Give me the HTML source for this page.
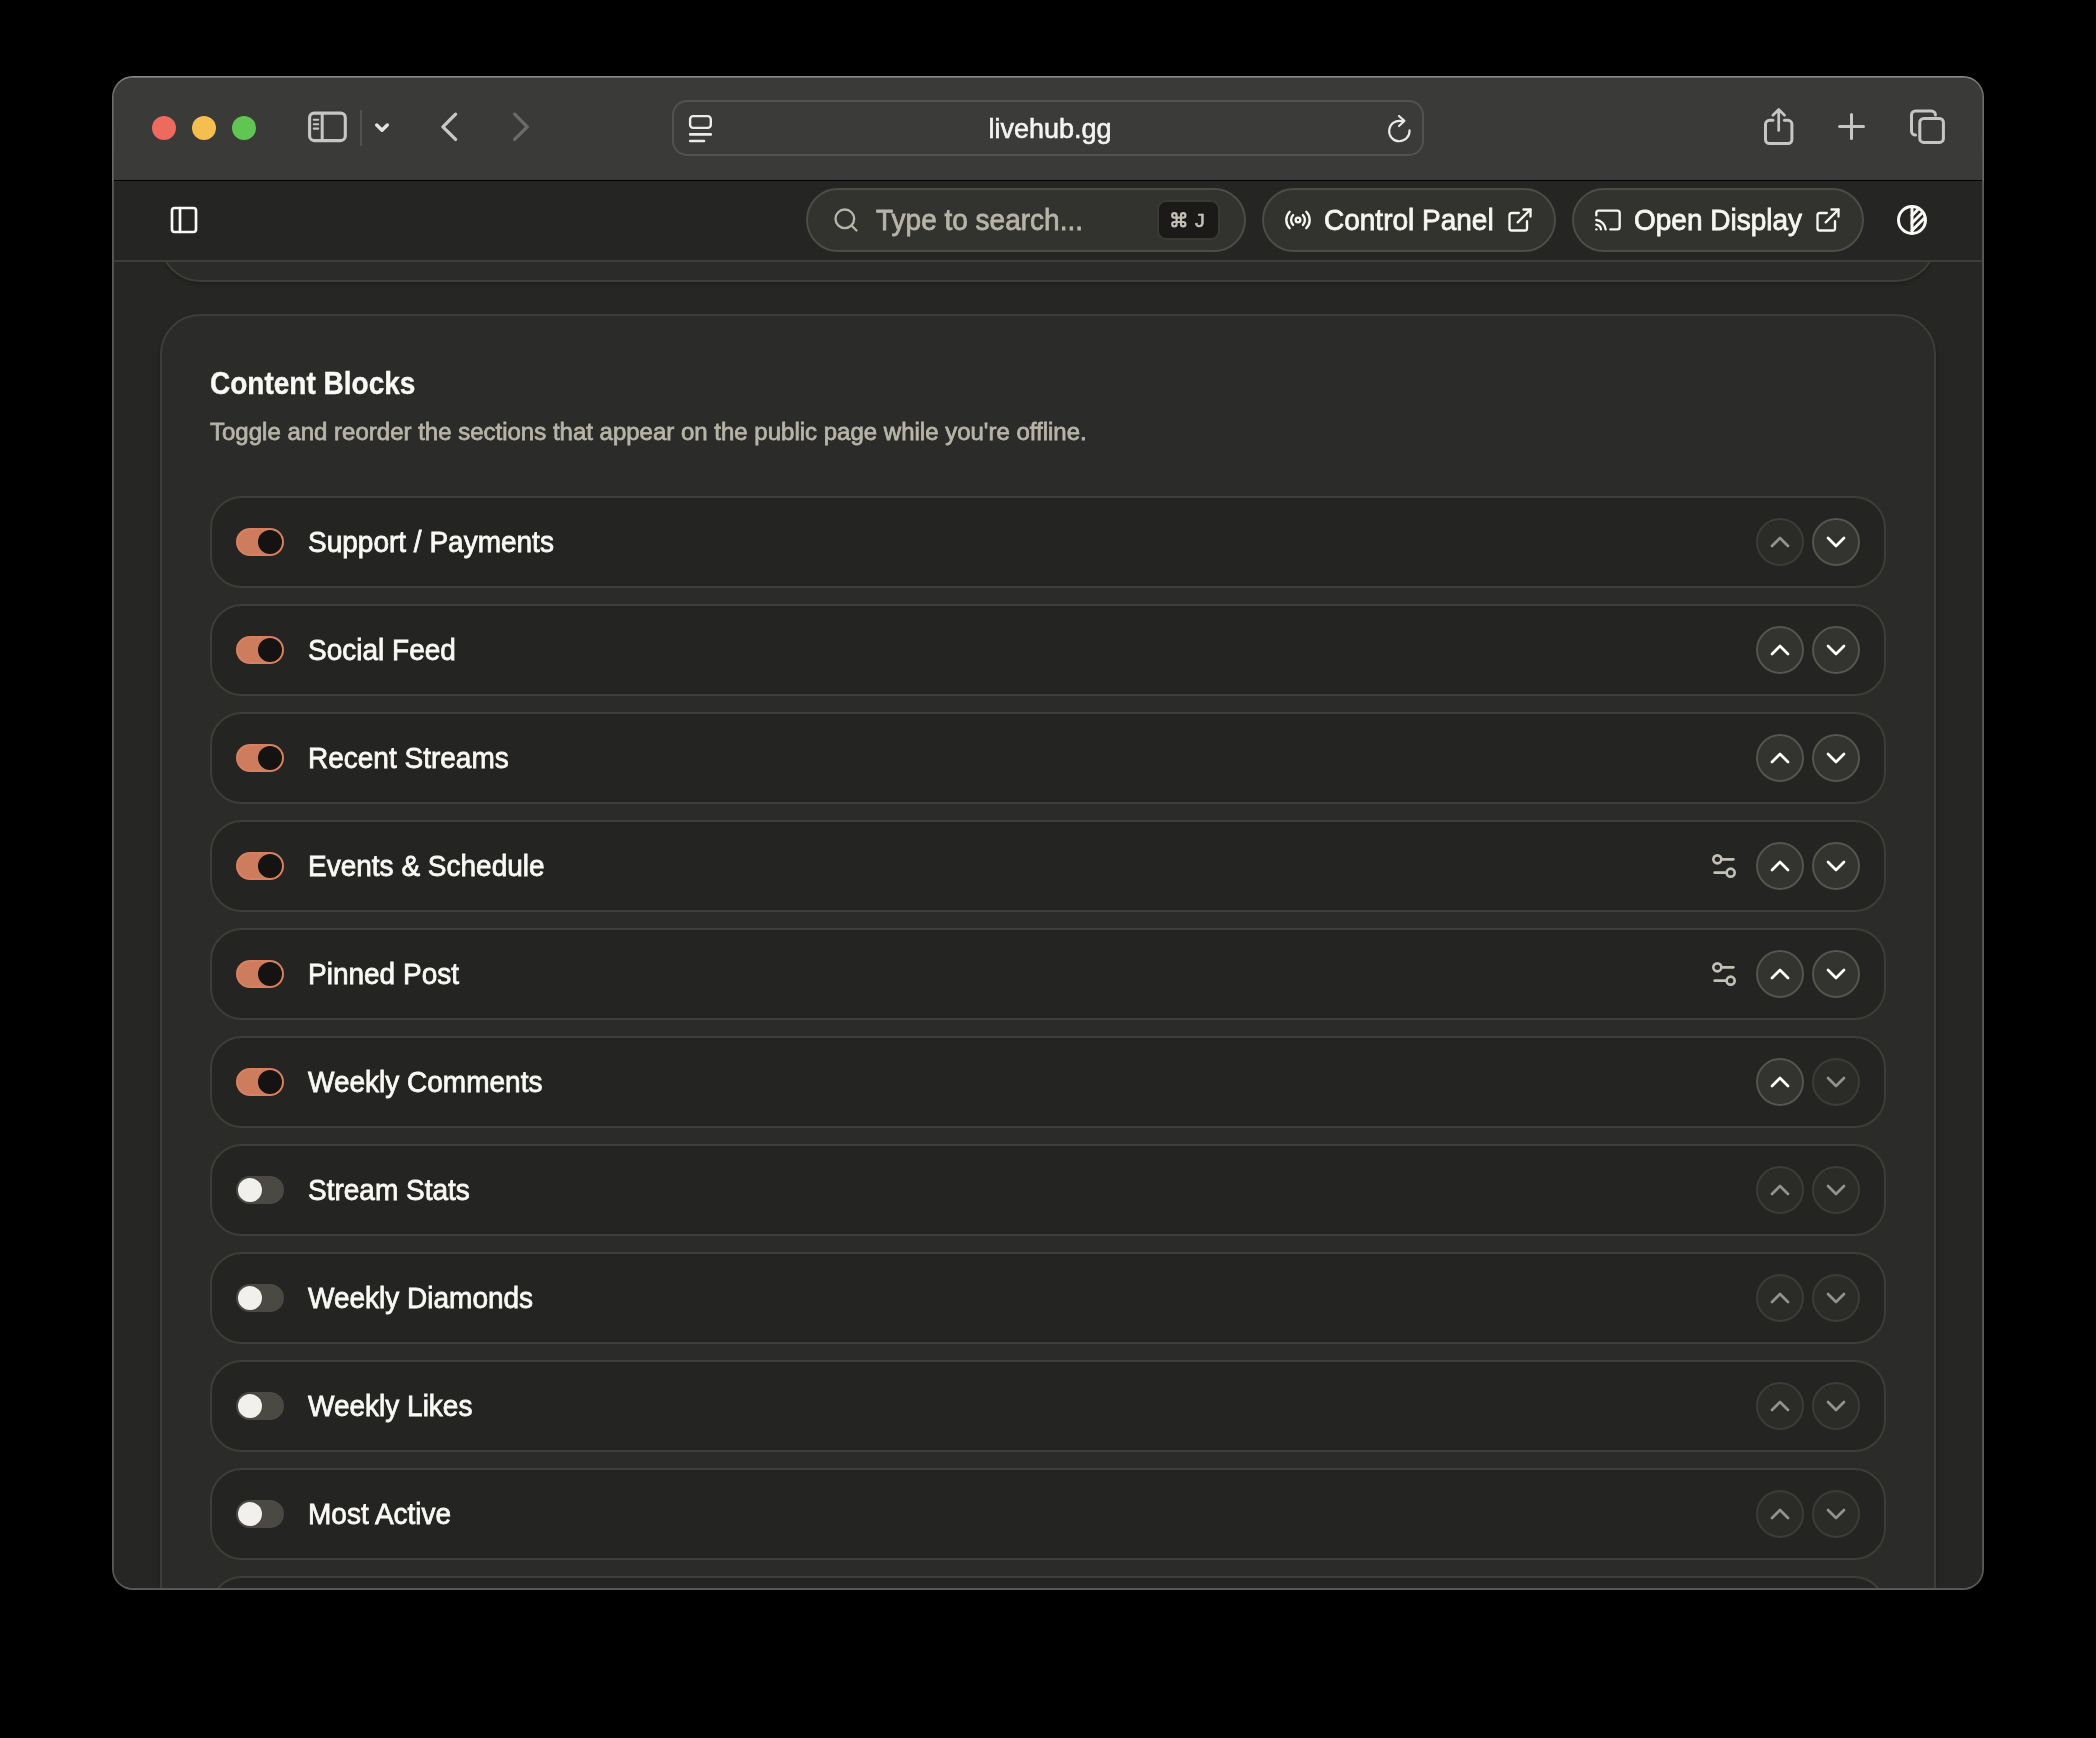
<!DOCTYPE html>
<html><head><meta charset="utf-8"><title>livehub.gg</title>
<style>
*{box-sizing:border-box;margin:0;padding:0}
html,body{width:2096px;height:1738px;background:#000;overflow:hidden}
body{font-family:"Liberation Sans",sans-serif;position:relative}
.abs{position:absolute}
.t{position:absolute;white-space:nowrap}
#win{position:absolute;left:112px;top:76px;width:1872px;height:1514px;border-radius:21px;background:linear-gradient(180deg,#8c8c8c 0,#6e6e6e 20px,#6a6a6a 104px,#5a5a58 105px,#5a5a58 100%);overflow:hidden}
#win2{position:absolute;left:1px;top:1px;right:1px;bottom:1px;border-radius:20px;background:linear-gradient(180deg,#6a6a6a 0,#585858 20px,#565656 103px,#50504e 104px,#50504e 1490px,#565654 1512px)}
#winin{position:absolute;left:2px;top:2px;right:2px;bottom:2px;border-radius:19px;overflow:hidden;background:#262624}
#pg{position:absolute;left:-114px;top:-78px;width:2096px;height:1738px;will-change:transform}
.tl{position:absolute;width:24px;height:24px;border-radius:50%;top:116px}
#url{position:absolute;left:672px;top:100px;width:752px;height:56px;border:2px solid #525250;border-radius:15px;background:#3b3b39}
.pill{position:absolute;top:188px;height:64px;border:2px solid #4d4c46;border-radius:32px;background:#32322e}
.card{position:absolute;left:160px;width:1776px;border:2px solid #3e3e38;background:#2b2b29;box-shadow:0 2px 5px rgba(0,0,0,.14),0 2px 3px -1px rgba(0,0,0,.12)}
.row{position:absolute;left:210px;width:1676px;height:92px;border:2px solid #3e3e38;border-radius:32px;background:#242422}
.sw{position:absolute;left:236px;width:48px;height:28px;border-radius:14px}
.sw.on{background:#cd7c5e;border:2px solid #d98060}
.sw.off{background:#4a4943;border:2px solid #4a4943}
.sw i{position:absolute;top:0;width:24px;height:24px;border-radius:50%;display:block}
.sw.on i{left:20px;background:#141311}
.sw.off i{left:0;background:#f1f0ec}
.btn{position:absolute;width:48px;height:48px;border-radius:50%;border:2px solid #55544d;background:#33332f}
.btn.dis{opacity:.5}
.btn svg{position:absolute;left:6px;top:6px}
</style></head><body>
<div id="win"><div id="win2"></div><div id="winin"><div id="pg">
<div class="abs" style="left:114px;top:78px;width:1868px;height:102px;background:#3a3a38"></div>
<div class="abs" style="left:114px;top:180px;width:1868px;height:1px;background:#000"></div>
<div class="abs" style="left:114px;top:262px;width:1868px;height:1326px;background:#262624"></div>
<div class="card" style="top:200px;height:82px;border-radius:40px"></div>
<div class="card" style="top:314px;height:1400px;border-radius:40px"></div>
<div class="t" style="left:210px;top:364.30px;height:42px;line-height:42px;font-size:28px;color:#faf9f5;font-weight:bold;-webkit-text-stroke:0.35px #faf9f5;transform-origin:0 30.70px;transform:scaleY(1.11);">Content Blocks</div>
<div class="t" style="left:210px;top:413.68px;height:36px;line-height:36px;font-size:24px;color:#b7b5a9;font-weight:normal;-webkit-text-stroke:0.75px #b7b5a9;transform-origin:0 26.32px;transform:scaleY(1.03);">Toggle and reorder the sections that appear on the public page while you're offline.</div>
<div class="row" style="top:496px"></div><div class="sw on" style="top:528px"><i></i></div><div class="t" style="left:308px;top:522.30px;height:42px;line-height:42px;font-size:28px;color:#faf9f5;font-weight:normal;-webkit-text-stroke:0.75px #faf9f5;transform-origin:0 30.70px;transform:scaleY(1.03);">Support / Payments</div><div class="btn dis" style="left:1756px;top:518px"><svg width="32" height="32" viewBox="0 0 24 24" fill="none" stroke="#fff" stroke-width="2" stroke-linecap="round" stroke-linejoin="round"><path d="m18 15-6-6-6 6"/></svg></div><div class="btn" style="left:1812px;top:518px"><svg width="32" height="32" viewBox="0 0 24 24" fill="none" stroke="#fff" stroke-width="2" stroke-linecap="round" stroke-linejoin="round"><path d="m6 9 6 6 6-6"/></svg></div>
<div class="row" style="top:604px"></div><div class="sw on" style="top:636px"><i></i></div><div class="t" style="left:308px;top:630.30px;height:42px;line-height:42px;font-size:28px;color:#faf9f5;font-weight:normal;-webkit-text-stroke:0.75px #faf9f5;transform-origin:0 30.70px;transform:scaleY(1.03);">Social Feed</div><div class="btn" style="left:1756px;top:626px"><svg width="32" height="32" viewBox="0 0 24 24" fill="none" stroke="#fff" stroke-width="2" stroke-linecap="round" stroke-linejoin="round"><path d="m18 15-6-6-6 6"/></svg></div><div class="btn" style="left:1812px;top:626px"><svg width="32" height="32" viewBox="0 0 24 24" fill="none" stroke="#fff" stroke-width="2" stroke-linecap="round" stroke-linejoin="round"><path d="m6 9 6 6 6-6"/></svg></div>
<div class="row" style="top:712px"></div><div class="sw on" style="top:744px"><i></i></div><div class="t" style="left:308px;top:738.30px;height:42px;line-height:42px;font-size:28px;color:#faf9f5;font-weight:normal;-webkit-text-stroke:0.75px #faf9f5;transform-origin:0 30.70px;transform:scaleY(1.03);">Recent Streams</div><div class="btn" style="left:1756px;top:734px"><svg width="32" height="32" viewBox="0 0 24 24" fill="none" stroke="#fff" stroke-width="2" stroke-linecap="round" stroke-linejoin="round"><path d="m18 15-6-6-6 6"/></svg></div><div class="btn" style="left:1812px;top:734px"><svg width="32" height="32" viewBox="0 0 24 24" fill="none" stroke="#fff" stroke-width="2" stroke-linecap="round" stroke-linejoin="round"><path d="m6 9 6 6 6-6"/></svg></div>
<div class="row" style="top:820px"></div><div class="sw on" style="top:852px"><i></i></div><div class="t" style="left:308px;top:846.30px;height:42px;line-height:42px;font-size:28px;color:#faf9f5;font-weight:normal;-webkit-text-stroke:0.75px #faf9f5;transform-origin:0 30.70px;transform:scaleY(1.03);">Events &amp; Schedule</div><svg class="abs" style="left:1708px;top:850px" width="32" height="32" viewBox="0 0 24 24" fill="none" stroke="#c3c0b6" stroke-width="2" stroke-linecap="round" stroke-linejoin="round"><path d="M19 7h-9"/><path d="M14 17H5"/><circle cx="17" cy="17" r="3"/><circle cx="7" cy="7" r="3"/></svg><div class="btn" style="left:1756px;top:842px"><svg width="32" height="32" viewBox="0 0 24 24" fill="none" stroke="#fff" stroke-width="2" stroke-linecap="round" stroke-linejoin="round"><path d="m18 15-6-6-6 6"/></svg></div><div class="btn" style="left:1812px;top:842px"><svg width="32" height="32" viewBox="0 0 24 24" fill="none" stroke="#fff" stroke-width="2" stroke-linecap="round" stroke-linejoin="round"><path d="m6 9 6 6 6-6"/></svg></div>
<div class="row" style="top:928px"></div><div class="sw on" style="top:960px"><i></i></div><div class="t" style="left:308px;top:954.30px;height:42px;line-height:42px;font-size:28px;color:#faf9f5;font-weight:normal;-webkit-text-stroke:0.75px #faf9f5;transform-origin:0 30.70px;transform:scaleY(1.03);">Pinned Post</div><svg class="abs" style="left:1708px;top:958px" width="32" height="32" viewBox="0 0 24 24" fill="none" stroke="#c3c0b6" stroke-width="2" stroke-linecap="round" stroke-linejoin="round"><path d="M19 7h-9"/><path d="M14 17H5"/><circle cx="17" cy="17" r="3"/><circle cx="7" cy="7" r="3"/></svg><div class="btn" style="left:1756px;top:950px"><svg width="32" height="32" viewBox="0 0 24 24" fill="none" stroke="#fff" stroke-width="2" stroke-linecap="round" stroke-linejoin="round"><path d="m18 15-6-6-6 6"/></svg></div><div class="btn" style="left:1812px;top:950px"><svg width="32" height="32" viewBox="0 0 24 24" fill="none" stroke="#fff" stroke-width="2" stroke-linecap="round" stroke-linejoin="round"><path d="m6 9 6 6 6-6"/></svg></div>
<div class="row" style="top:1036px"></div><div class="sw on" style="top:1068px"><i></i></div><div class="t" style="left:308px;top:1062.30px;height:42px;line-height:42px;font-size:28px;color:#faf9f5;font-weight:normal;-webkit-text-stroke:0.75px #faf9f5;transform-origin:0 30.70px;transform:scaleY(1.03);">Weekly Comments</div><div class="btn" style="left:1756px;top:1058px"><svg width="32" height="32" viewBox="0 0 24 24" fill="none" stroke="#fff" stroke-width="2" stroke-linecap="round" stroke-linejoin="round"><path d="m18 15-6-6-6 6"/></svg></div><div class="btn dis" style="left:1812px;top:1058px"><svg width="32" height="32" viewBox="0 0 24 24" fill="none" stroke="#fff" stroke-width="2" stroke-linecap="round" stroke-linejoin="round"><path d="m6 9 6 6 6-6"/></svg></div>
<div class="row" style="top:1144px"></div><div class="sw off" style="top:1176px"><i></i></div><div class="t" style="left:308px;top:1170.30px;height:42px;line-height:42px;font-size:28px;color:#faf9f5;font-weight:normal;-webkit-text-stroke:0.75px #faf9f5;transform-origin:0 30.70px;transform:scaleY(1.03);">Stream Stats</div><div class="btn dis" style="left:1756px;top:1166px"><svg width="32" height="32" viewBox="0 0 24 24" fill="none" stroke="#fff" stroke-width="2" stroke-linecap="round" stroke-linejoin="round"><path d="m18 15-6-6-6 6"/></svg></div><div class="btn dis" style="left:1812px;top:1166px"><svg width="32" height="32" viewBox="0 0 24 24" fill="none" stroke="#fff" stroke-width="2" stroke-linecap="round" stroke-linejoin="round"><path d="m6 9 6 6 6-6"/></svg></div>
<div class="row" style="top:1252px"></div><div class="sw off" style="top:1284px"><i></i></div><div class="t" style="left:308px;top:1278.30px;height:42px;line-height:42px;font-size:28px;color:#faf9f5;font-weight:normal;-webkit-text-stroke:0.75px #faf9f5;transform-origin:0 30.70px;transform:scaleY(1.03);">Weekly Diamonds</div><div class="btn dis" style="left:1756px;top:1274px"><svg width="32" height="32" viewBox="0 0 24 24" fill="none" stroke="#fff" stroke-width="2" stroke-linecap="round" stroke-linejoin="round"><path d="m18 15-6-6-6 6"/></svg></div><div class="btn dis" style="left:1812px;top:1274px"><svg width="32" height="32" viewBox="0 0 24 24" fill="none" stroke="#fff" stroke-width="2" stroke-linecap="round" stroke-linejoin="round"><path d="m6 9 6 6 6-6"/></svg></div>
<div class="row" style="top:1360px"></div><div class="sw off" style="top:1392px"><i></i></div><div class="t" style="left:308px;top:1386.30px;height:42px;line-height:42px;font-size:28px;color:#faf9f5;font-weight:normal;-webkit-text-stroke:0.75px #faf9f5;transform-origin:0 30.70px;transform:scaleY(1.03);">Weekly Likes</div><div class="btn dis" style="left:1756px;top:1382px"><svg width="32" height="32" viewBox="0 0 24 24" fill="none" stroke="#fff" stroke-width="2" stroke-linecap="round" stroke-linejoin="round"><path d="m18 15-6-6-6 6"/></svg></div><div class="btn dis" style="left:1812px;top:1382px"><svg width="32" height="32" viewBox="0 0 24 24" fill="none" stroke="#fff" stroke-width="2" stroke-linecap="round" stroke-linejoin="round"><path d="m6 9 6 6 6-6"/></svg></div>
<div class="row" style="top:1468px"></div><div class="sw off" style="top:1500px"><i></i></div><div class="t" style="left:308px;top:1494.30px;height:42px;line-height:42px;font-size:28px;color:#faf9f5;font-weight:normal;-webkit-text-stroke:0.75px #faf9f5;transform-origin:0 30.70px;transform:scaleY(1.03);">Most Active</div><div class="btn dis" style="left:1756px;top:1490px"><svg width="32" height="32" viewBox="0 0 24 24" fill="none" stroke="#fff" stroke-width="2" stroke-linecap="round" stroke-linejoin="round"><path d="m18 15-6-6-6 6"/></svg></div><div class="btn dis" style="left:1812px;top:1490px"><svg width="32" height="32" viewBox="0 0 24 24" fill="none" stroke="#fff" stroke-width="2" stroke-linecap="round" stroke-linejoin="round"><path d="m6 9 6 6 6-6"/></svg></div>
<div class="row" style="top:1576px"></div>

<div class="abs" style="left:114px;top:181px;width:1868px;height:79px;background:#252523"></div>
<div class="abs" style="left:114px;top:260px;width:1868px;height:2px;background:#3e3e38"></div>

<svg class="abs" style="left:168px;top:204px" width="32" height="32" viewBox="0 0 24 24" fill="none" stroke="#faf9f5" stroke-width="2" stroke-linecap="round" stroke-linejoin="round"><rect width="18" height="18" x="3" y="3" rx="2"/><path d="M9 3v18"/></svg>
<div class="pill" style="left:806px;width:440px"></div>
<svg class="abs" style="left:832px;top:206px" width="28" height="28" viewBox="0 0 24 24" fill="none" stroke="#b7b5a9" stroke-width="2" stroke-linecap="round" stroke-linejoin="round"><circle cx="11" cy="11" r="8"/><path d="m21 21-4.3-4.3"/></svg>
<div class="t" style="left:876px;top:200.30px;height:42px;line-height:42px;font-size:28px;color:#b7b5a9;font-weight:normal;-webkit-text-stroke:0.75px #b7b5a9;transform-origin:0 30.70px;transform:scaleY(1.03);">Type to search...</div>
<div class="abs" style="left:1157px;top:200px;width:63px;height:40px;border:2px solid #3a3a35;border-radius:9px;background:#1b1a18"></div>
<svg class="abs" style="left:1169.6px;top:210.8px" width="17.6" height="17.6" viewBox="0 0 24 24" fill="none" stroke="#c3c0b6" stroke-width="3.0" stroke-linecap="round" stroke-linejoin="round"><path d="M15 6v12a3 3 0 1 0 3-3H6a3 3 0 1 0 3 3V6a3 3 0 1 0-3 3h12a3 3 0 1 0-3-3"/></svg>
<div class="t" style="left:1193.4px;top:206.40px;height:31px;line-height:31px;font-size:20.5px;color:#c3c0b6;font-weight:normal;font-family:'Liberation Mono',monospace;-webkit-text-stroke:0.5px #c3c0b6;transform-origin:0 22.60px;transform:scaleY(1.0);">J</div>
<div class="pill" style="left:1262px;width:294px"></div>
<svg class="abs" style="left:1284px;top:206px" width="28" height="28" viewBox="0 0 24 24" fill="none" stroke="#f7f6f1" stroke-width="2" stroke-linecap="round" stroke-linejoin="round"><path d="M4.9 19.1C1 15.2 1 8.8 4.9 4.9"/><path d="M7.8 16.2c-2.3-2.3-2.3-6.1 0-8.5"/><circle cx="12" cy="12" r="2"/><path d="M16.2 7.8c2.3 2.3 2.3 6.1 0 8.5"/><path d="M19.1 4.9C23 8.8 23 15.1 19.1 19"/></svg>
<div class="t" style="left:1324px;top:200.30px;height:42px;line-height:42px;font-size:28px;color:#f7f6f1;font-weight:normal;-webkit-text-stroke:0.75px #f7f6f1;transform-origin:0 30.70px;transform:scaleY(1.03);">Control Panel</div>
<svg class="abs" style="left:1506px;top:206px" width="28" height="28" viewBox="0 0 24 24" fill="none" stroke="#f7f6f1" stroke-width="2" stroke-linecap="round" stroke-linejoin="round"><path d="M15 3h6v6"/><path d="M10 14 21 3"/><path d="M18 13v6a2 2 0 0 1-2 2H5a2 2 0 0 1-2-2V8a2 2 0 0 1 2-2h6"/></svg>
<div class="pill" style="left:1572px;width:292px"></div>
<svg class="abs" style="left:1594px;top:206px" width="28" height="28" viewBox="0 0 24 24" fill="none" stroke="#f7f6f1" stroke-width="2" stroke-linecap="round" stroke-linejoin="round"><path d="M2 8V6a2 2 0 0 1 2-2h16a2 2 0 0 1 2 2v12a2 2 0 0 1-2 2h-6"/><path d="M2 12a9 9 0 0 1 8 8"/><path d="M2 16a5 5 0 0 1 4 4"/><line x1="2" x2="2.01" y1="20" y2="20"/></svg>
<div class="t" style="left:1634px;top:200.30px;height:42px;line-height:42px;font-size:28px;color:#f7f6f1;font-weight:normal;-webkit-text-stroke:0.75px #f7f6f1;transform-origin:0 30.70px;transform:scaleY(1.03);">Open Display</div>
<svg class="abs" style="left:1814px;top:206px" width="28" height="28" viewBox="0 0 24 24" fill="none" stroke="#f7f6f1" stroke-width="2" stroke-linecap="round" stroke-linejoin="round"><path d="M15 3h6v6"/><path d="M10 14 21 3"/><path d="M18 13v6a2 2 0 0 1-2 2H5a2 2 0 0 1-2-2V8a2 2 0 0 1 2-2h6"/></svg>
<svg class="abs" style="left:1894px;top:202px" width="36" height="36" viewBox="0 0 24 24" fill="none" stroke="#faf9f5" stroke-width="2" stroke-linecap="round" stroke-linejoin="round"><path d="M12 12m-9 0a9 9 0 1 0 18 0a9 9 0 1 0 -18 0"/><path d="M12 3v18"/><path d="M12 14l7 -7"/><path d="M12 19l8.500 -8.500"/><path d="M12 9l4.500 -4.500"/></svg>


<div class="tl" style="left:152px;background:#ee6a5f"></div>
<div class="tl" style="left:192px;background:#f5bf4f"></div>
<div class="tl" style="left:232px;background:#61c554"></div>
<svg class="abs" style="left:0;top:78px" width="2096" height="102" viewBox="0 78 2096 102" fill="none" stroke-linecap="round" stroke-linejoin="round">
 <!-- sidebar icon -->
 <rect x="309.6" y="113.1" width="35.7" height="27.5" rx="4.6" stroke="#c6c6c6" stroke-width="3.1"/>
 <path d="M322.2 113.5V140.3" stroke="#c6c6c6" stroke-width="3"/>
 <path d="M313.8 119.8h4.4M313.8 124.2h4.4M313.8 128.6h4.4" stroke="#c6c6c6" stroke-width="2.1"/>
 <path d="M361 110V146" stroke="#515150" stroke-width="2" stroke-linecap="butt"/>
 <path d="M376.7 125L382 130.3L387.3 125" stroke="#e4e4e4" stroke-width="3.4"/>
 <!-- back / fwd -->
 <path d="M455.6 114.2L442.9 126.8L455.6 139.4" stroke="#c9c9c9" stroke-width="3.3"/>
 <path d="M514.6 114.2L527.3 126.8L514.6 139.4" stroke="#6b6b6a" stroke-width="3.3"/>
 <!-- share -->
 <path d="M1773 120.3H1769.5a4 4 0 0 0 -4 4V139.6a4 4 0 0 0 4 4H1787.9a4 4 0 0 0 4 -4V124.3a4 4 0 0 0 -4 -4H1784.4" stroke="#c6c6c6" stroke-width="3"/>
 <path d="M1778.7 130.4V109.9M1772.9 115.3L1778.7 109.5L1784.5 115.3" stroke="#c6c6c6" stroke-width="2.7"/>
 <!-- plus -->
 <path d="M1839.6 126.6H1863.5M1851.5 114.6V138.5" stroke="#c6c6c6" stroke-width="3"/>
 <!-- tabs -->
 <path d="M1915.4 135.1H1915.5a4 4 0 0 1 -4 -4V115a4 4 0 0 1 4 -4H1931.4a4 4 0 0 1 4 4V114.9" stroke="#c6c6c6" stroke-width="3"/>
 <rect x="1919.8" y="118.5" width="23.6" height="23.9" rx="4" stroke="#c6c6c6" stroke-width="3"/>
</svg>
<div id="url"></div>
<div class="t" style="left:674px;top:109.04px;height:40px;line-height:40px;font-size:27px;color:#f4f4f4;font-weight:normal;-webkit-text-stroke:0.6px #f4f4f4;transform-origin:0 29.36px;transform:scaleY(0.99);width:752px;text-align:center;">livehub.gg</div>
<svg class="abs" style="left:672px;top:100px" width="752" height="56" viewBox="672 100 752 56" fill="none" stroke-linecap="round" stroke-linejoin="round">
 <rect x="690.1" y="116.1" width="20.7" height="11.8" rx="3.1" stroke="#ebebeb" stroke-width="2.4"/>
 <path d="M690.2 134.4H710.8M690.2 141H704" stroke="#ebebeb" stroke-width="2.6"/>
 <path d="M1409.5 130.3A10.2 10.2 0 1 1 1401.6 121.1L1404 121" stroke="#e9e9e9" stroke-width="2.15"/>
 <path d="M1399 116L1404.4 120.9L1399 126.1" stroke="#e9e9e9" stroke-width="2.15"/>
</svg>

</div></div></div>
</body></html>
